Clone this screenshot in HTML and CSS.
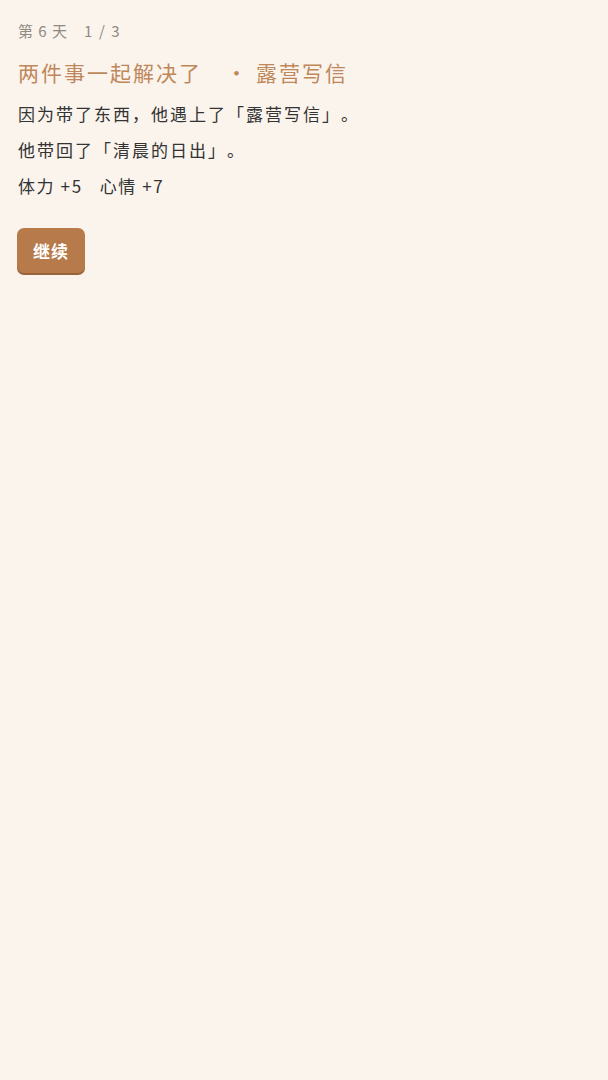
FILE: index.html
```html
<!DOCTYPE html>
<html lang="zh">
<head>
<meta charset="utf-8">
<link rel="stylesheet" href="styles.css">
</head>
<body>
<main class="screen">
  <div class="meta"><span>第 6 天</span><span class="step">1 / 3</span></div>
  <h1 class="title"><span>两件事一起解决了</span><span class="sub"><span class="dot">·</span>露营写信</span></h1>
  <p class="line">因为带了东西，他遇上了「露营写信」。</p>
  <p class="line">他带回了「清晨的日出」。</p>
  <p class="line stats"><span>体力 +5</span><span>心情 +7</span></p>
  <button class="continue">继续</button>
</main>
</body>
</html>
```
FILE: styles.css
```css
html, body {
  margin: 0;
  padding: 0;
  background: #faf4ed;
}
body {
  font-family: "Noto Sans CJK SC", "Noto Sans", sans-serif;
  color: #333;
  text-spacing-trim: space-all;
}
.screen {
  padding: 18px 18px;
  display: flex;
  flex-direction: column;
  align-items: flex-start;
}
.meta {
  font-size: 15px;
  letter-spacing: 1px;
  color: #8f8982;
  line-height: 26px;
  display: flex;
  gap: 16px;
}
.meta .step {
  letter-spacing: 1.6px;
}
.title {
  margin: 13px 0 0;
  font-size: 21px;
  font-weight: 400;
  letter-spacing: 2px;
  color: #c0875a;
  line-height: 30px;
  display: flex;
}
.title .sub {
  margin-left: 24px;
}
.title .dot {
  margin-right: 7px;
}
.line {
  margin: 0;
  font-size: 17px;
  letter-spacing: 2px;
  line-height: 36px;
  color: #333;
}
.title + .line {
  margin-top: 9px;
}
.stats {
  display: flex;
  gap: 17px;
  letter-spacing: 1.6px;
}
.continue {
  margin: 24px 0 0 -1px;
  width: 68px;
  height: 45px;
  border: none;
  border-radius: 7px;
  background: #b67a4b;
  box-shadow: 0 2px 0 #9a643a;
  color: #fff;
  font-family: "Noto Sans CJK SC", sans-serif;
  font-size: 17px;
  font-weight: 700;
  letter-spacing: 1px;
  padding: 0;
}
```
